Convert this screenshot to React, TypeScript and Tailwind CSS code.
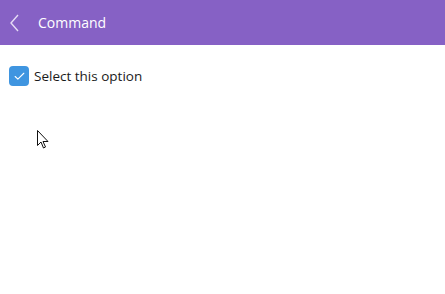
import { Check } from "lucide-react";

export default function App() {
  return (
    <div className="relative w-[445px] h-[294px] bg-white font-['Open_Sans','Noto_Sans',sans-serif] overflow-hidden">
      {/* header */}
      <div className="h-[45px] bg-[#8661c5] flex items-center">
        <svg className="ml-[10px]" width="9" height="18" viewBox="0 0 9 18" fill="none">
          <path d="M8 1 L1 9 L8 17" stroke="#e6dcf5" strokeWidth="1.4" />
        </svg>
        <span className="ml-[19px] text-[14px] text-white">Command</span>
      </div>

      {/* checkbox row */}
      <label className="flex items-center mt-[21px] ml-[9px] gap-[5px]">
        <span className="w-[20px] h-[20px] rounded-[4px] bg-[#3f95e0] flex items-center justify-center">
          <Check size={13} strokeWidth={2} className="text-white" />
        </span>
        <span className="text-[13.5px] text-[#1a1a1a]">Select this option</span>
      </label>

      {/* mouse cursor */}
      <svg
        className="absolute left-[37px] top-[130px]"
        width="13"
        height="19"
        viewBox="0 0 13 19"
      >
        <path
          d="M0.5 0.5 L0.5 15.5 L4 12 L6.5 18 L8.5 17 L6 11.5 L11 11.5 Z"
          fill="white"
          stroke="#111"
          strokeWidth="1"
          strokeLinejoin="round"
        />
      </svg>
    </div>
  );
}
